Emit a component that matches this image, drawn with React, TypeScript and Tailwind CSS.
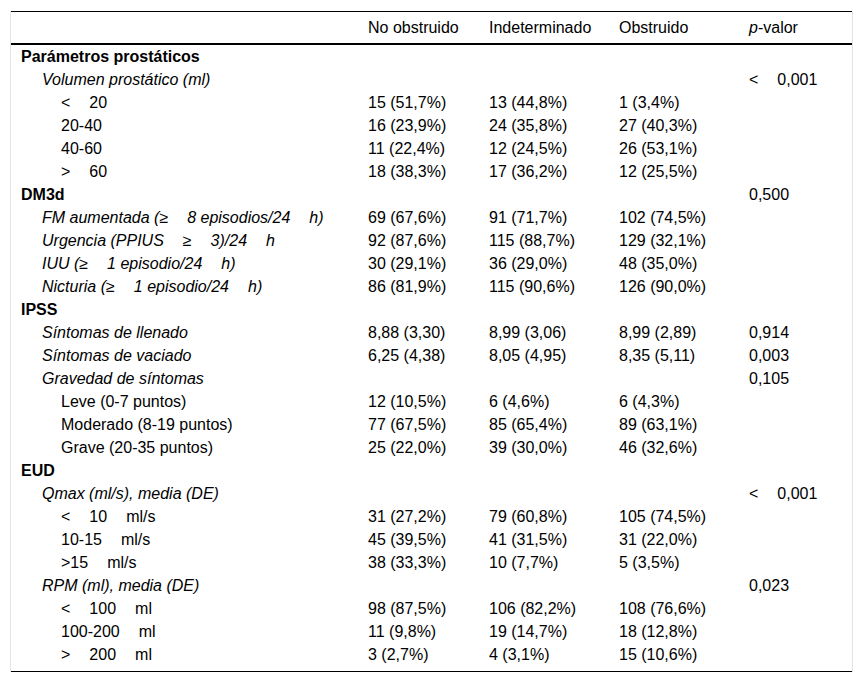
const COLS = "grid grid-cols-[347px_121px_130px_130px_113px]";

type Row = {
  label: string;
  level: 0 | 1 | 2;
  values?: [string, string, string];
  p?: string;
};

// "|" marks the wide space used in the source table
const ROWS: Row[] = [
  { label: "Parámetros prostáticos", level: 0 },
  { label: "Volumen prostático (ml)", level: 1, p: "<|0,001" },
  { label: "<|20", level: 2, values: ["15 (51,7%)", "13 (44,8%)", "1 (3,4%)"] },
  { label: "20-40", level: 2, values: ["16 (23,9%)", "24 (35,8%)", "27 (40,3%)"] },
  { label: "40-60", level: 2, values: ["11 (22,4%)", "12 (24,5%)", "26 (53,1%)"] },
  { label: ">|60", level: 2, values: ["18 (38,3%)", "17 (36,2%)", "12 (25,5%)"] },
  { label: "DM3d", level: 0, p: "0,500" },
  { label: "FM aumentada (≥|8 episodios/24|h)", level: 1, values: ["69 (67,6%)", "91 (71,7%)", "102 (74,5%)"] },
  { label: "Urgencia (PPIUS|≥|3)/24|h", level: 1, values: ["92 (87,6%)", "115 (88,7%)", "129 (32,1%)"] },
  { label: "IUU (≥|1 episodio/24|h)", level: 1, values: ["30 (29,1%)", "36 (29,0%)", "48 (35,0%)"] },
  { label: "Nicturia (≥|1 episodio/24|h)", level: 1, values: ["86 (81,9%)", "115 (90,6%)", "126 (90,0%)"] },
  { label: "IPSS", level: 0 },
  { label: "Síntomas de llenado", level: 1, values: ["8,88 (3,30)", "8,99 (3,06)", "8,99 (2,89)"], p: "0,914" },
  { label: "Síntomas de vaciado", level: 1, values: ["6,25 (4,38)", "8,05 (4,95)", "8,35 (5,11)"], p: "0,003" },
  { label: "Gravedad de síntomas", level: 1, p: "0,105" },
  { label: "Leve (0-7 puntos)", level: 2, values: ["12 (10,5%)", "6 (4,6%)", "6 (4,3%)"] },
  { label: "Moderado (8-19 puntos)", level: 2, values: ["77 (67,5%)", "85 (65,4%)", "89 (63,1%)"] },
  { label: "Grave (20-35 puntos)", level: 2, values: ["25 (22,0%)", "39 (30,0%)", "46 (32,6%)"] },
  { label: "EUD", level: 0 },
  { label: "Qmax (ml/s), media (DE)", level: 1, p: "<|0,001" },
  { label: "<|10|ml/s", level: 2, values: ["31 (27,2%)", "79 (60,8%)", "105 (74,5%)"] },
  { label: "10-15|ml/s", level: 2, values: ["45 (39,5%)", "41 (31,5%)", "31 (22,0%)"] },
  { label: ">15|ml/s", level: 2, values: ["38 (33,3%)", "10 (7,7%)", "5 (3,5%)"] },
  { label: "RPM (ml), media (DE)", level: 1, p: "0,023" },
  { label: "<|100|ml", level: 2, values: ["98 (87,5%)", "106 (82,2%)", "108 (76,6%)"] },
  { label: "100-200|ml", level: 2, values: ["11 (9,8%)", "19 (14,7%)", "18 (12,8%)"] },
  { label: ">|200|ml", level: 2, values: ["3 (2,7%)", "4 (3,1%)", "15 (10,6%)"] },
];

const INDENT = ["pl-[10px] font-bold", "pl-[31px] italic", "pl-[50px]"];

function Spaced({ text }: { text: string }) {
  const parts = text.split("|");
  return (
    <>
      {parts.map((part, i) => (
        <span key={i}>
          {i > 0 && <span className="inline-block w-[19px]" />}
          {part}
        </span>
      ))}
    </>
  );
}

export default function App() {
  return (
    <div className="min-h-screen bg-white pt-[11px] pl-[10px] font-['Liberation_Sans',Arial,sans-serif] text-[16px] text-black">
      <div className="w-[843px] border-x border-[#e4e4e4]">
        {/* Header */}
        <div className={`${COLS} h-[34px] items-center border-t border-b-2 border-black`}>
          <div />
          <div className="pl-[10px]">No obstruido</div>
          <div className="pl-[10px]">Indeterminado</div>
          <div className="pl-[10px]">Obstruido</div>
          <div className="pl-[10px]">
            <span className="italic">p</span>-valor
          </div>
        </div>

        {/* Body */}
        <div className="pb-[5px] border-b border-black">
          {ROWS.map((row, i) => (
            <div key={i} className={`${COLS} h-[23px] leading-[23px] whitespace-nowrap`}>
              <div className={INDENT[row.level]}>
                <Spaced text={row.label} />
              </div>
              {[0, 1, 2].map((c) => (
                <div key={c} className="pl-[10px]">
                  {row.values?.[c] ?? ""}
                </div>
              ))}
              <div className="pl-[10px]">{row.p ? <Spaced text={row.p} /> : null}</div>
            </div>
          ))}
        </div>
      </div>
    </div>
  );
}
